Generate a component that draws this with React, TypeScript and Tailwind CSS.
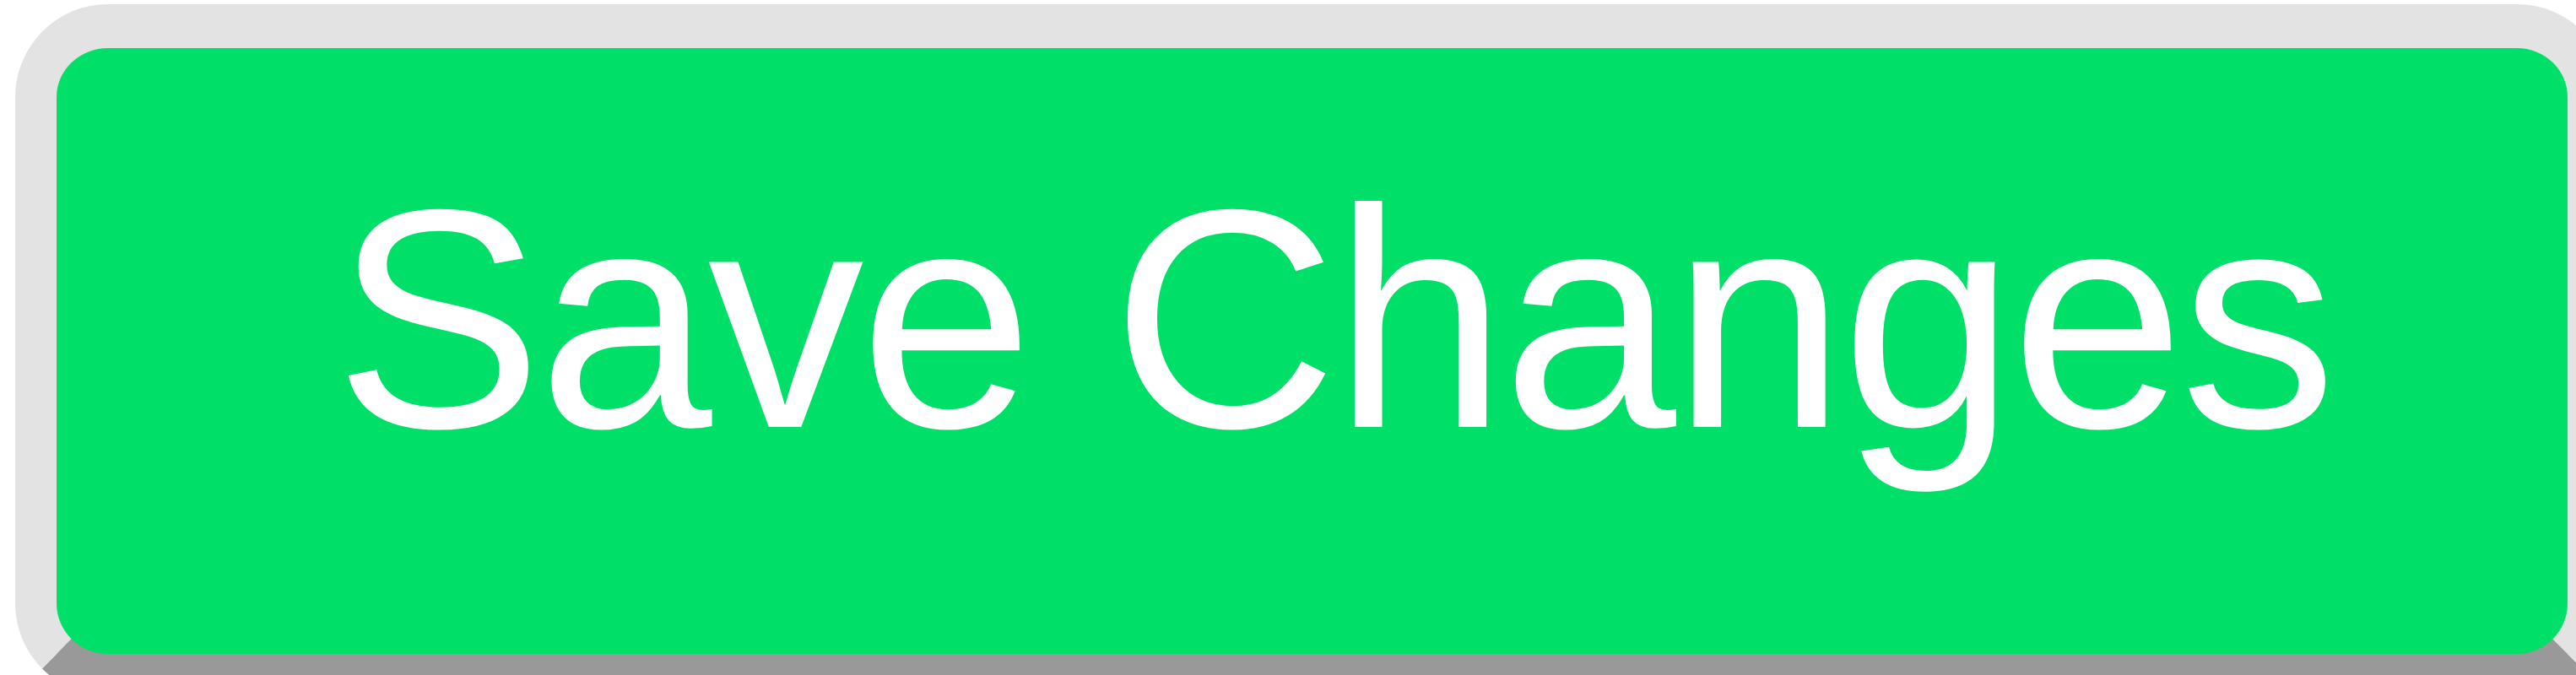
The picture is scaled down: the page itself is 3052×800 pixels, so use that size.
const App = () => {
  return (
    <div className="w-[3052px] h-[800px] overflow-hidden bg-white">
      <button
        type="button"
        className="ml-[18px] mt-[5px] flex w-[3074px] h-[820px] items-start rounded-[110px] border-solid border-t-[52px] border-l-[49px] border-r-[50px] border-b-[50px] border-t-[#e3e3e4] border-l-[#e3e3e4] border-r-[#e3e3e4] border-b-[#999999] bg-[#00e068] pl-[329px] pt-[108px] text-left"
      >
        <span className="font-['Liberation_Sans',Arial,sans-serif] text-[370px] leading-[1.15] text-white tracking-[-5px] whitespace-nowrap">
          Save Changes
        </span>
      </button>
    </div>
  );
};

export default App;
